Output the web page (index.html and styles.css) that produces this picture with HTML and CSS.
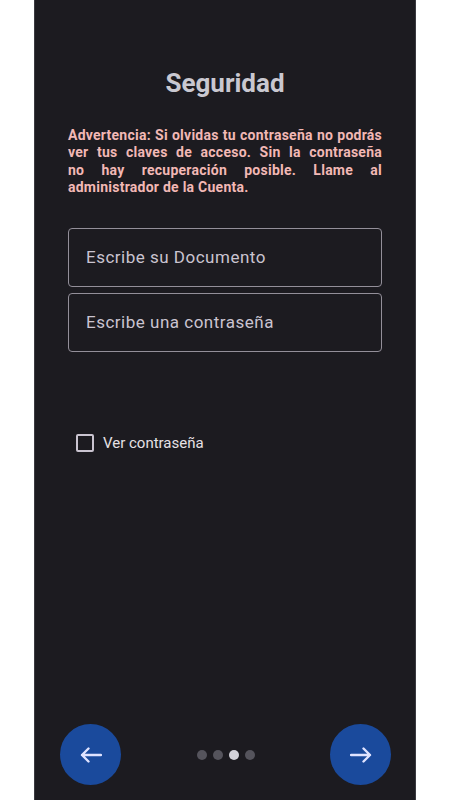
FILE: index.html
```html
<!DOCTYPE html>
<html lang="es">
<head>
    <meta charset="UTF-8">
    <meta name="viewport" content="width=device-width, initial-scale=1.0">
    <title>Seguridad</title>
    <link rel="stylesheet" href="styles.css">
</head>
<body>
    <div class="screen">
        <h1 class="title">Seguridad</h1>
        <p class="warning">Advertencia: Si olvidas tu contraseña no podrás ver tus claves de acceso. Sin la contraseña no&nbsp;hay recuperación posible. Llame al administrador de la Cuenta.</p>

        <form class="fields">
            <input class="field" type="text" placeholder="Escribe su Documento">
            <input class="field" type="password" placeholder="Escribe una contraseña">
        </form>

        <label class="show-pass">
            <input type="checkbox" class="check">
            <span>Ver contraseña</span>
        </label>

        <div class="footer">
            <button class="nav-btn" aria-label="Anterior">
                <svg width="22" height="16" viewBox="0 0 22 16">
                    <path d="M21 8H2M8.5 1.5L2 8l6.5 6.5" fill="none" stroke="#dfe3ff" stroke-width="2.4" stroke-linecap="round" stroke-linejoin="round"/>
                </svg>
            </button>
            <div class="dots">
                <span class="dot"></span>
                <span class="dot"></span>
                <span class="dot active"></span>
                <span class="dot"></span>
            </div>
            <button class="nav-btn" aria-label="Siguiente">
                <svg width="22" height="16" viewBox="0 0 22 16">
                    <path d="M1 8h19M13.5 1.5L20 8l-6.5 6.5" fill="none" stroke="#dfe3ff" stroke-width="2.4" stroke-linecap="round" stroke-linejoin="round"/>
                </svg>
            </button>
        </div>
    </div>
</body>
</html>
```

FILE: styles.css
```css
body {
    margin: 0;
    background: #fff;
    font-family: Roboto, "Noto Sans", Arial, sans-serif;
}
.screen {
    width: 382px;
    height: 800px;
    margin: 0 auto;
    box-sizing: border-box;
    padding: 0 33px 15px 33px;
    background: #1c1b20;
    border-left: 1px solid #3a3a40;
    border-right: 1px solid #3a3a40;
    display: flex;
    flex-direction: column;
}
.title {
    margin: 66px 0 0;
    text-align: center;
    font-size: 26px;
    line-height: 34px;
    font-weight: 700;
    color: #c9c8d0;
}
.warning {
    margin: 27px 0 0;
    font-size: 14px;
    line-height: 17.4px;
    font-weight: 700;
    letter-spacing: 0.25px;
    color: #f2b8b5;
    text-align: justify;
}
.fields {
    margin-top: 31px;
    display: flex;
    flex-direction: column;
    gap: 6px;
}
.field {
    height: 59px;
    box-sizing: border-box;
    padding: 0 17px;
    background: transparent;
    border: 1px solid #938f99;
    border-radius: 4px;
    font-family: inherit;
    font-size: 17px;
    letter-spacing: 0.5px;
    color: #e6e1e5;
    outline: none;
}
.field::placeholder {
    color: #cac4d0;
}
.show-pass {
    margin: 82px 0 0 8px;
    display: flex;
    align-items: center;
    gap: 9px;
    font-size: 15px;
    color: #e6e1e5;
}
.check {
    appearance: none;
    margin: 0;
    width: 18px;
    height: 18px;
    border: 2px solid #cac4d0;
    border-radius: 2px;
    box-sizing: border-box;
}
.footer {
    margin: auto -9px 0 -8px;
    display: flex;
    align-items: center;
    justify-content: space-between;
}
.nav-btn {
    width: 61px;
    height: 61px;
    border: none;
    border-radius: 50%;
    background: #1a4a9c;
    display: flex;
    align-items: center;
    justify-content: center;
    padding: 0;
}
.dots {
    display: flex;
    gap: 6px;
}
.dot {
    width: 10px;
    height: 10px;
    border-radius: 50%;
    background: #55545c;
}
.dot.active {
    background: #d4d3da;
}
```
